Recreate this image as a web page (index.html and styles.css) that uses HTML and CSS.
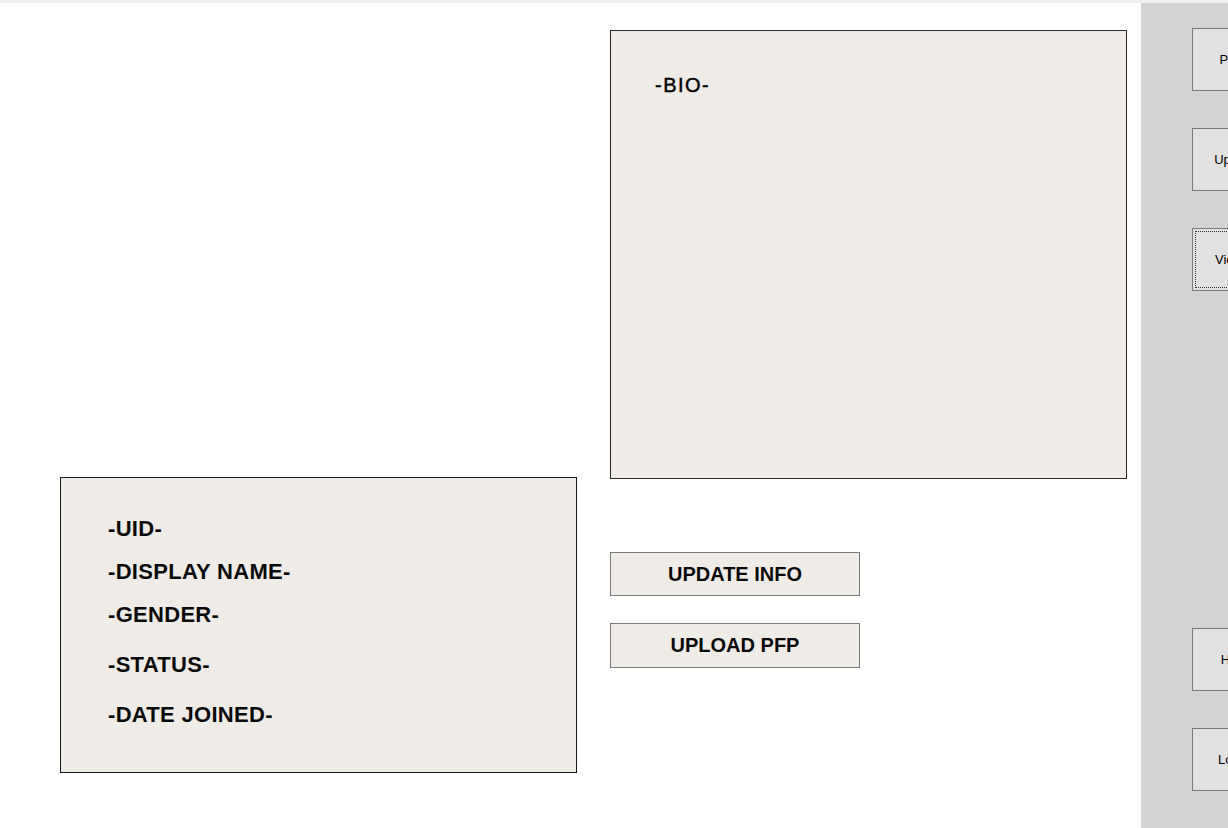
FILE: index.html
```html
<!DOCTYPE html>
<html>
<head>
<meta charset="utf-8">
<link rel="stylesheet" href="styles.css">
</head>
<body>
<div class="topstrip"></div>
<div class="window">
  <main class="main">
    <section class="col col-left">
      <div class="info-box">
        <div class="label">-UID-</div>
        <div class="label">-DISPLAY NAME-</div>
        <div class="label">-GENDER-</div>
        <div class="label spaced">-STATUS-</div>
        <div class="label spaced">-DATE JOINED-</div>
      </div>
    </section>
    <section class="col col-right">
      <div class="bio-box">
        <div class="bio-text">-BIO-</div>
      </div>
      <button class="action first">UPDATE INFO</button>
      <button class="action second">UPLOAD PFP</button>
    </section>
  </main>
  <aside class="sidebar">
    <div class="side-group top">
      <button class="side-btn">Profile</button>
      <button class="side-btn">Uploads</button>
      <button class="side-btn focused"><span class="focus-ring">Viewers</span></button>
    </div>
    <div class="side-group bottom">
      <button class="side-btn">Home</button>
      <button class="side-btn">Logout</button>
    </div>
  </aside>
</div>
</body>
</html>
```

FILE: styles.css
```css
html, body {
  margin: 0;
  padding: 0;
  width: 1228px;
  height: 828px;
  overflow: hidden;
  background: #ffffff;
  font-family: "Liberation Sans", Arial, sans-serif;
  color: #000;
}

.topstrip {
  height: 3px;
  background: #f0f0f5;
}

.window {
  display: flex;
  height: 825px;
}

.main {
  flex: 1;
  display: flex;
  gap: 33px;
  padding-left: 60px;
}

.col {
  width: 517px;
  display: flex;
  flex-direction: column;
}

.col-left {
  padding-top: 474px;
}

.col-right {
  padding-top: 27px;
}

.info-box {
  box-sizing: border-box;
  height: 296px;
  border: 1px solid #1a1a1a;
  background: #efebe6;
  padding: 29px 0 0 47px;
  display: flex;
  flex-direction: column;
}

.label {
  font-weight: bold;
  font-size: 22px;
  letter-spacing: 0.3px;
  line-height: 43px;
  height: 43px;
  color: #0a0a0a;
}

.label.spaced {
  margin-top: 7px;
}

.bio-box {
  box-sizing: border-box;
  height: 449px;
  border: 1px solid #2a2a2a;
  background: #efebe6;
  padding: 39px 0 0 44px;
}

.bio-text {
  font-size: 20px;
  line-height: 30px;
  letter-spacing: 1.5px;
  -webkit-text-stroke: 0.45px #000;
}

.action {
  box-sizing: border-box;
  width: 250px;
  height: 44px;
  border: 1px solid #7a7a7a;
  background: #efebe6;
  font-family: "Liberation Sans", Arial, sans-serif;
  font-weight: bold;
  font-size: 20px;
  color: #0a0a0a;
  padding: 0;
  margin: 0;
}

.action.first {
  margin-top: 73px;
}

.action.second {
  margin-top: 27px;
  height: 45px;
}

.sidebar {
  width: 87px;
  flex: none;
  background: #d3d3d3;
  display: flex;
  flex-direction: column;
  justify-content: space-between;
  overflow: hidden;
}

.side-group {
  display: flex;
  flex-direction: column;
  gap: 37px;
  padding-left: 51px;
}

.side-group.top {
  padding-top: 25px;
}

.side-group.bottom {
  padding-bottom: 37px;
}

.side-btn {
  box-sizing: border-box;
  width: 92px;
  height: 63px;
  flex: none;
  border: 1px solid #7a7a7a;
  background: #e1e1e1;
  font-family: "Liberation Sans", Arial, sans-serif;
  font-size: 13px;
  color: #000;
  padding: 0;
  margin: 0;
  text-align: center;
}

.side-btn.focused {
  padding: 2px;
}

.focus-ring {
  display: flex;
  align-items: center;
  justify-content: center;
  height: 100%;
  box-sizing: border-box;
  border: 1px dotted #333;
}
```
